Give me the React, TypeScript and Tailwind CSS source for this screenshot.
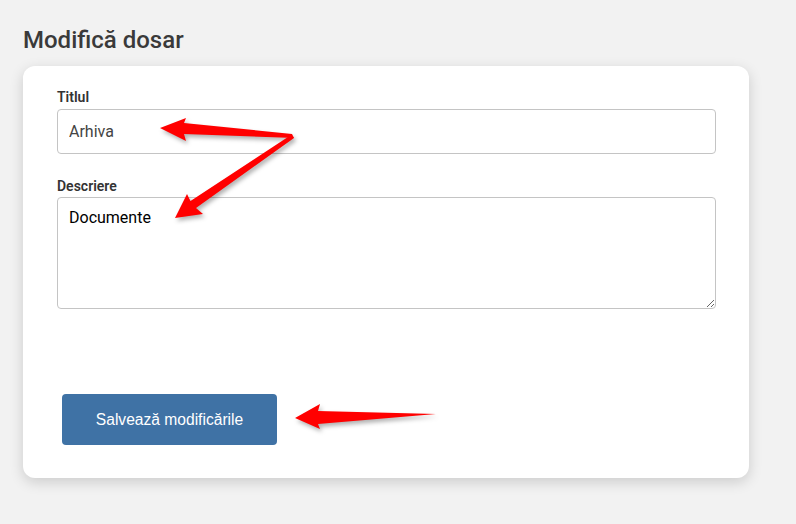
import { useState } from 'react'

const Arrows = () => (
  <svg
    className="pointer-events-none absolute left-0 top-0 drop-shadow-[2px_3px_2px_rgba(0,0,0,0.3)]"
    width="796"
    height="524"
    viewBox="0 0 796 524"
  >
    {/* Titlul */}
    <polygon points="160,128 186,118 184,123 292,134 294,138 184,134 186,141" fill="#ff0000" />
    {/* Descriere */}
    <polygon points="175,218 187,194 190.5,201 291,135 294,138 196,208 203,214" fill="#ff0000" />
    {/* buton */}
    <polygon points="295,418 320,404 318,411 436,414 318,424 320,429" fill="#ff0000" />
  </svg>
)

export default function App() {
  const [title, setTitle] = useState('Arhiva')
  const [desc, setDesc] = useState('Documente')

  return (
    <div className="relative min-h-[524px] w-[796px] bg-[#f2f2f2] pl-[23px] pt-[24px] font-['Roboto',sans-serif]">
      <h1 className="text-[24px] leading-[32px] font-medium text-[#3a3a3a]">Modifică dosar</h1>

      <div className="mt-[10px] w-[726px] rounded-[12px] bg-white pl-[34px] pr-[33px] pt-[21px] pb-[33px] shadow-[0_4px_14px_rgba(0,0,0,0.16)]">
        <label className="mb-[2px] block text-[14px] leading-[20px] font-semibold text-[#333]">Titlul</label>
        <input
          value={title}
          onChange={e => setTitle(e.target.value)}
          className="block h-[45px] w-full rounded-[4px] border border-[#c4c4c4] px-[11px] text-[16px] text-[#444] outline-none"
        />

        <label className="mt-[22px] mb-[1px] block text-[14px] leading-[20px] font-semibold text-[#333]">Descriere</label>
        <textarea
          value={desc}
          onChange={e => setDesc(e.target.value)}
          className="block h-[112px] w-full rounded-[4px] border border-[#c4c4c4] px-[11px] pt-[10px] text-[16px] leading-[19px] text-black outline-none"
        />

        <button className="ml-[5px] mt-[85px] h-[51px] w-[215px] rounded-[4px] bg-[#3f72a5] font-['Liberation_Sans',Arial,sans-serif] text-[15.6px] text-white">
          Salvează modificările
        </button>
      </div>

      <Arrows />
    </div>
  )
}
